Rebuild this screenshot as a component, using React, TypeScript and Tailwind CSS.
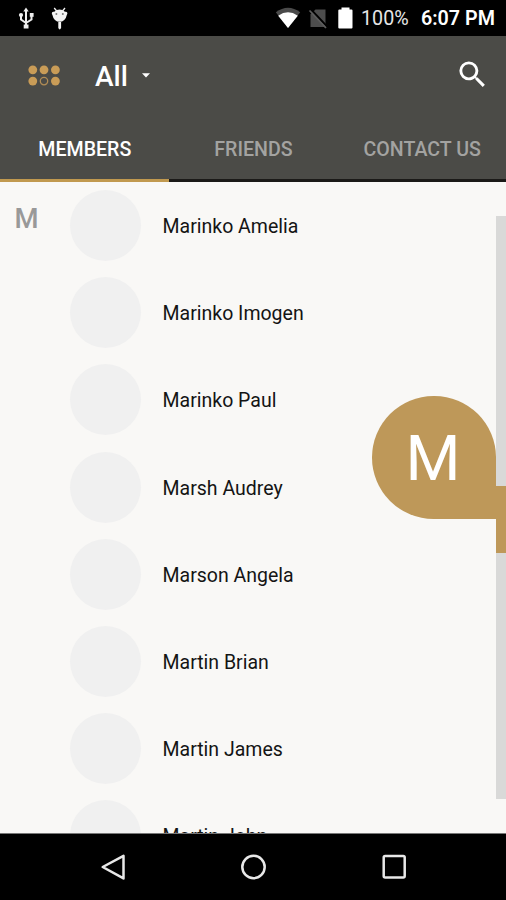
const members = [
  "Marinko Amelia",
  "Marinko Imogen",
  "Marinko Paul",
  "Marsh Audrey",
  "Marson Angela",
  "Martin Brian",
  "Martin James",
  "Martin John",
];

const tabs = ["MEMBERS", "FRIENDS", "CONTACT US"];

function StatusBar() {
  return (
    <div className="flex h-9 shrink-0 items-center bg-black pr-[11px] pl-[18px] text-white">
      <svg className="h-9 w-[17px]" viewBox="0 0 17 36" fill="none" stroke="#eee" strokeWidth="2">
        <path d="M8 11v14M8 23l-5-3.500v-4M8 23l5.500-3.500v-4" />
        <path d="M8 7.500l2.700 4h-5.400z" fill="#eee" stroke="none" />
        <circle cx="3" cy="15" r="2.100" fill="#eee" stroke="none" />
        <path d="M11.800 13h3.800v3.800h-3.800z" fill="#eee" stroke="none" />
        <path d="M5.700 24.500h4.800v4h-4.800z" fill="#eee" stroke="none" />
      </svg>
      <svg className="ml-4 h-9 w-[18px]" viewBox="0 0 18 36" fill="#f4f4f4">
        <path d="M3.200 8l2.500 3M14 8l-2.500 3" stroke="#f4f4f4" strokeWidth="1.300" />
        <path d="M.8 13.500q0-1.500 1.400-1.700h1Q8.600 7 14 11.800h1q1.400.2 1.400 1.700l-.7 1.800a7.200 7.800 0 0 1-14.200 0z" />
        <path d="M7.300 22h2.800v6q-1.400 2.800-2.800 0z" />
        <circle cx="5.400" cy="14" r="1" fill="#777" />
        <circle cx="11.800" cy="14" r="1" fill="#777" />
      </svg>
      <div className="grow" />
      <svg className="h-9 w-[26px]" viewBox="0 0 26 36">
        <path d="M.8 12.300Q13 3.300 25.200 12.300L13 28z" fill="#4a4a4a" />
        <path d="M3.200 15.700Q13 8.800 22.800 15.700L13 28z" fill="#fff" />
      </svg>
      <svg className="ml-[7px] h-9 w-5" viewBox="0 0 20 36">
        <path d="M7.500 9.500H17.500V27H2.500V14.500z" fill="#4d4d4d" />
        <path d="M2.500 9l18 19" stroke="#000" strokeWidth="2" />
        <path d="M1.500 10.500l16.500 17.500" stroke="#5c5c5c" strokeWidth="1.800" />
      </svg>
      <svg className="ml-[10px] h-9 w-[15px]" viewBox="0 0 15 36" fill="#fff">
        <path d="M3.500 7.500h8V9.500h2q1 0 1 1V27.500q0 1-1 1H1.300q-1 0-1-1V10.500q0-1 1-1h2.200z" />
      </svg>
      <span className="ml-[8px] w-[48px] pt-[2px] text-[19.700px] leading-9 text-[#e6e6e6]">100%</span>
      <span className="ml-[12px] w-[74px] whitespace-nowrap pt-[2px] text-[19.700px] leading-9 font-semibold">6:07 PM</span>
    </div>
  );
}

function Header() {
  return (
    <header className="flex h-[146px] shrink-0 flex-col bg-[#4b4b47]">
      <div className="flex h-20 items-center pr-4 pl-7">
        <svg className="h-[22px] w-8" viewBox="0 0 32 22" fill="#c99c57">
          <circle cx="4.800" cy="4.800" r="4.400" />
          <circle cx="16" cy="4.800" r="4.400" />
          <circle cx="27.400" cy="4.800" r="4.400" />
          <circle cx="4.800" cy="16.100" r="4.400" />
          <circle cx="16" cy="16.100" r="3.700" fill="none" stroke="#b18c55" strokeWidth="1.300" />
          <circle cx="27.400" cy="16.100" r="4.400" />
        </svg>
        <span className="ml-[35px] w-[33px] pt-[2px] text-[28px] font-medium text-white">All</span>
        <svg className="mb-[2px] ml-[13.500px] h-[5px] w-2" viewBox="0 0 8 5" fill="#fff">
          <path d="M0 .3h8L4 4.600z" />
        </svg>
        <svg className="mb-[3px] ml-auto h-[35px] w-[35px]" viewBox="0 0 24 24" fill="#fff">
          <path d="M15.500 14h-.79l-.28-.27A6.471 6.471 0 0 0 16 9.500 6.500 6.500 0 1 0 9.500 16c1.610 0 3.090-.59 4.230-1.570l.27.28v.79l5 4.990L20.490 19l-4.990-5zm-6 0C7.010 14 5 11.990 5 9.500S7.010 5 9.500 5 14 7.010 14 9.500 11.990 14 9.500 14z" />
        </svg>
      </div>
      <nav className="grid grow grid-cols-3">
        {tabs.map((tab, i) => (
          <div
            key={tab}
            className={`flex items-center justify-center border-b-[3px] pt-[4px] pl-px text-[19.600px] font-medium ${
              i === 0 ? "border-[#c1994f] text-white" : "border-[#1b1a18] text-[#a3a3a1]"
            }`}
          >
            {tab}
          </div>
        ))}
      </nav>
    </header>
  );
}

function FastScroller() {
  return (
    <div className="absolute top-[34px] right-0 h-[583px] w-[10px] bg-[#d9d9d8]">
      <div className="absolute top-[270px] right-0 h-[67px] w-[10px] bg-[#be9859]" />
      <div className="absolute top-[179.500px] right-[10px] flex h-[123.500px] w-[124px] items-center justify-center rounded-full rounded-br-none bg-[#be9859] pt-[2px] pr-[2px] text-[63px] leading-none text-white">
        M
      </div>
      <div className="absolute top-[270px] right-[9px] h-[33px] w-[3px] bg-[#be9859]" />
    </div>
  );
}

function BottomNav() {
  return (
    <div className="flex h-[67px] shrink-0 items-center justify-between border-t border-[#777] bg-black px-[100px]">
      <svg className="h-7 w-7" viewBox="0 0 28 28" fill="none" stroke="#e8e8e8" strokeWidth="2.500" strokeLinejoin="round">
        <path d="M23.500 2.800v22.600L2.700 14z" />
      </svg>
      <svg className="h-7 w-7" viewBox="0 0 28 28" fill="none" stroke="#e8e8e8" strokeWidth="2.500">
        <circle cx="14.500" cy="14" r="11.200" />
      </svg>
      <svg className="h-7 w-7" viewBox="0 0 28 28" fill="none" stroke="#e8e8e8" strokeWidth="2.500">
        <rect x="5.700" y="3" width="21" height="21.500" rx="1.500" />
      </svg>
    </div>
  );
}

export default function App() {
  return (
    <div className="flex h-[900px] w-[506px] flex-col overflow-hidden bg-[#f9f8f6] font-['Roboto',sans-serif]">
      <StatusBar />
      <Header />
      <main className="relative flex min-h-0 grow overflow-hidden">
        <div className="w-[70px] shrink-0 pt-[21px] pl-[14.500px] text-[27.500px] leading-8 font-medium text-[#999]">M</div>
        <ul className="grow">
          {members.map((name) => (
            <li key={name} className="flex h-[87.200px] items-center">
              <span className="size-[71px] rounded-full bg-[#f0f0f0]" />
              <span className="ml-[21.500px] pt-[2px] text-[19.500px] text-[#141414]">{name}</span>
            </li>
          ))}
        </ul>
        <FastScroller />
      </main>
      <BottomNav />
    </div>
  );
}
